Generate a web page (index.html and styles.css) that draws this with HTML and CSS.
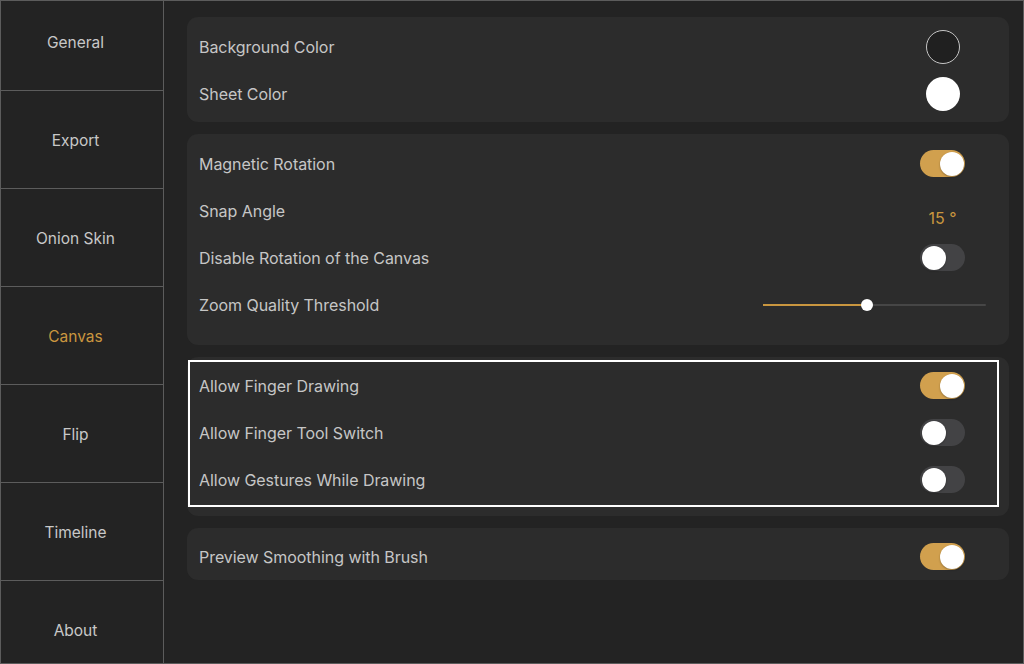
FILE: index.html
```html
<!DOCTYPE html>
<html lang="en">
<head>
    <meta charset="UTF-8">
    <meta name="viewport" content="width=device-width, initial-scale=1.0">
    <title>Settings</title>
    <link rel="stylesheet" href="styles.css">
</head>
<body>
<div class="app">
    <ul class="side">
        <li>General</li>
        <li>Export</li>
        <li>Onion Skin</li>
        <li class="active">Canvas</li>
        <li>Flip</li>
        <li>Timeline</li>
        <li>About</li>
    </ul>
    <div class="main">
        <div class="card c1">
            <div class="row"><span>Background Color</span><span class="ctl"><i class="swatch dark"></i></span></div>
            <div class="row"><span>Sheet Color</span><span class="ctl"><i class="swatch light"></i></span></div>
        </div>
        <div class="card c2">
            <div class="row"><span>Magnetic Rotation</span><span class="ctl"><i class="switch on"></i></span></div>
            <div class="row"><span>Snap Angle</span><span class="ctl"><b class="value">15 °</b></span></div>
            <div class="row"><span>Disable Rotation of the Canvas</span><span class="ctl"><i class="switch"></i></span></div>
            <div class="row"><span>Zoom Quality Threshold</span>
                <span class="slider"><span class="fill" style="width:104px"></span><span class="thumb" style="left:104px"></span></span>
            </div>
        </div>
        <div class="card c3">
            <div class="row"><span>Allow Finger Drawing</span><span class="ctl"><i class="switch on"></i></span></div>
            <div class="row"><span>Allow Finger Tool Switch</span><span class="ctl"><i class="switch"></i></span></div>
            <div class="row"><span>Allow Gestures While Drawing</span><span class="ctl"><i class="switch"></i></span></div>
            <div class="mark"></div>
        </div>
        <div class="card c4">
            <div class="row"><span>Preview Smoothing with Brush</span><span class="ctl"><i class="switch on"></i></span></div>
        </div>
    </div>
</div>
</body>
</html>
```

FILE: styles.css
```css
*{
    margin: 0;
    padding: 0;
    list-style: none;
    box-sizing: border-box;
}
body{
    background-color: #232323;
    font-family: Inter, "Noto Sans", sans-serif;
    color: #c6c6c6;
}
.app{
    display: flex;
    width: 1024px;
    height: 664px;
    border: 1px solid #5c5c5c;
    overflow: hidden;
}
.side{
    width: 163px;
    flex: none;
    border-right: 1px solid #5c5c5c;
    margin-top: -8px;
    background-color: #232323;
}
.side li{
    height: 98px;
    border-bottom: 1px solid #5c5c5c;
    display: flex;
    align-items: center;
    justify-content: center;
    font-size: 15.5px;
    padding: 2px 13px 0 0;
    color: #c8c8c8;
}
.side li.active{
    color: #c9963f;
}
.main{
    flex: 1;
    padding: 16px 14px 0 23px;
}
.card{
    position: relative;
    background-color: #2c2c2c;
    border-radius: 11px;
    padding: 6px 41px 5px 12px;
}
.c2{
    margin-top: 12px;
    padding-bottom: 17px;
}
.c3{
    margin-top: 12px;
    padding-top: 5px;
    padding-bottom: 13px;
}
.c4{
    margin-top: 12px;
    padding-top: 5px;
    padding-bottom: 0;
}
.row{
    height: 47px;
    display: flex;
    align-items: center;
    justify-content: space-between;
    font-size: 16px;
    letter-spacing: -0.05px;
}
.ctl{
    width: 51px;
    display: flex;
    justify-content: center;
}
.swatch{
    display: block;
    width: 34px;
    height: 34px;
    border-radius: 50%;
}
.swatch.dark{
    background-color: #202020;
    border: 1.5px solid #c6c6c6;
}
.swatch.light{
    background-color: #fff;
}
.switch{
    position: relative;
    display: block;
    width: 45px;
    height: 27px;
    border-radius: 14px;
    background-color: #434345;
}
.switch::after{
    content: '';
    position: absolute;
    top: 1.5px;
    left: 1.5px;
    width: 24px;
    height: 24px;
    border-radius: 50%;
    background-color: #fff;
    box-shadow: 0 1px 2px rgba(0,0,0,0.3);
}
.switch.on{
    background-color: #d1a04e;
}
.switch.on::after{
    left: 19.5px;
}
.value{
    font-weight: normal;
    color: #c9963f;
    font-size: 16px;
    margin-top: 14px;
}
.slider{
    position: relative;
    width: 223px;
    height: 2px;
    margin-right: -18px;
    background-color: #464646;
    border-radius: 1px;
}
.slider .fill{
    position: absolute;
    left: 0;
    top: 0;
    height: 2px;
    background-color: #c9963f;
}
.slider .thumb{
    position: absolute;
    top: -5px;
    width: 12px;
    height: 12px;
    margin-left: -6px;
    border-radius: 50%;
    background-color: #fff;
}
.mark{
    position: absolute;
    left: 1px;
    top: 3px;
    right: 10px;
    bottom: 9px;
    border: 2px solid #fff;
}
```
